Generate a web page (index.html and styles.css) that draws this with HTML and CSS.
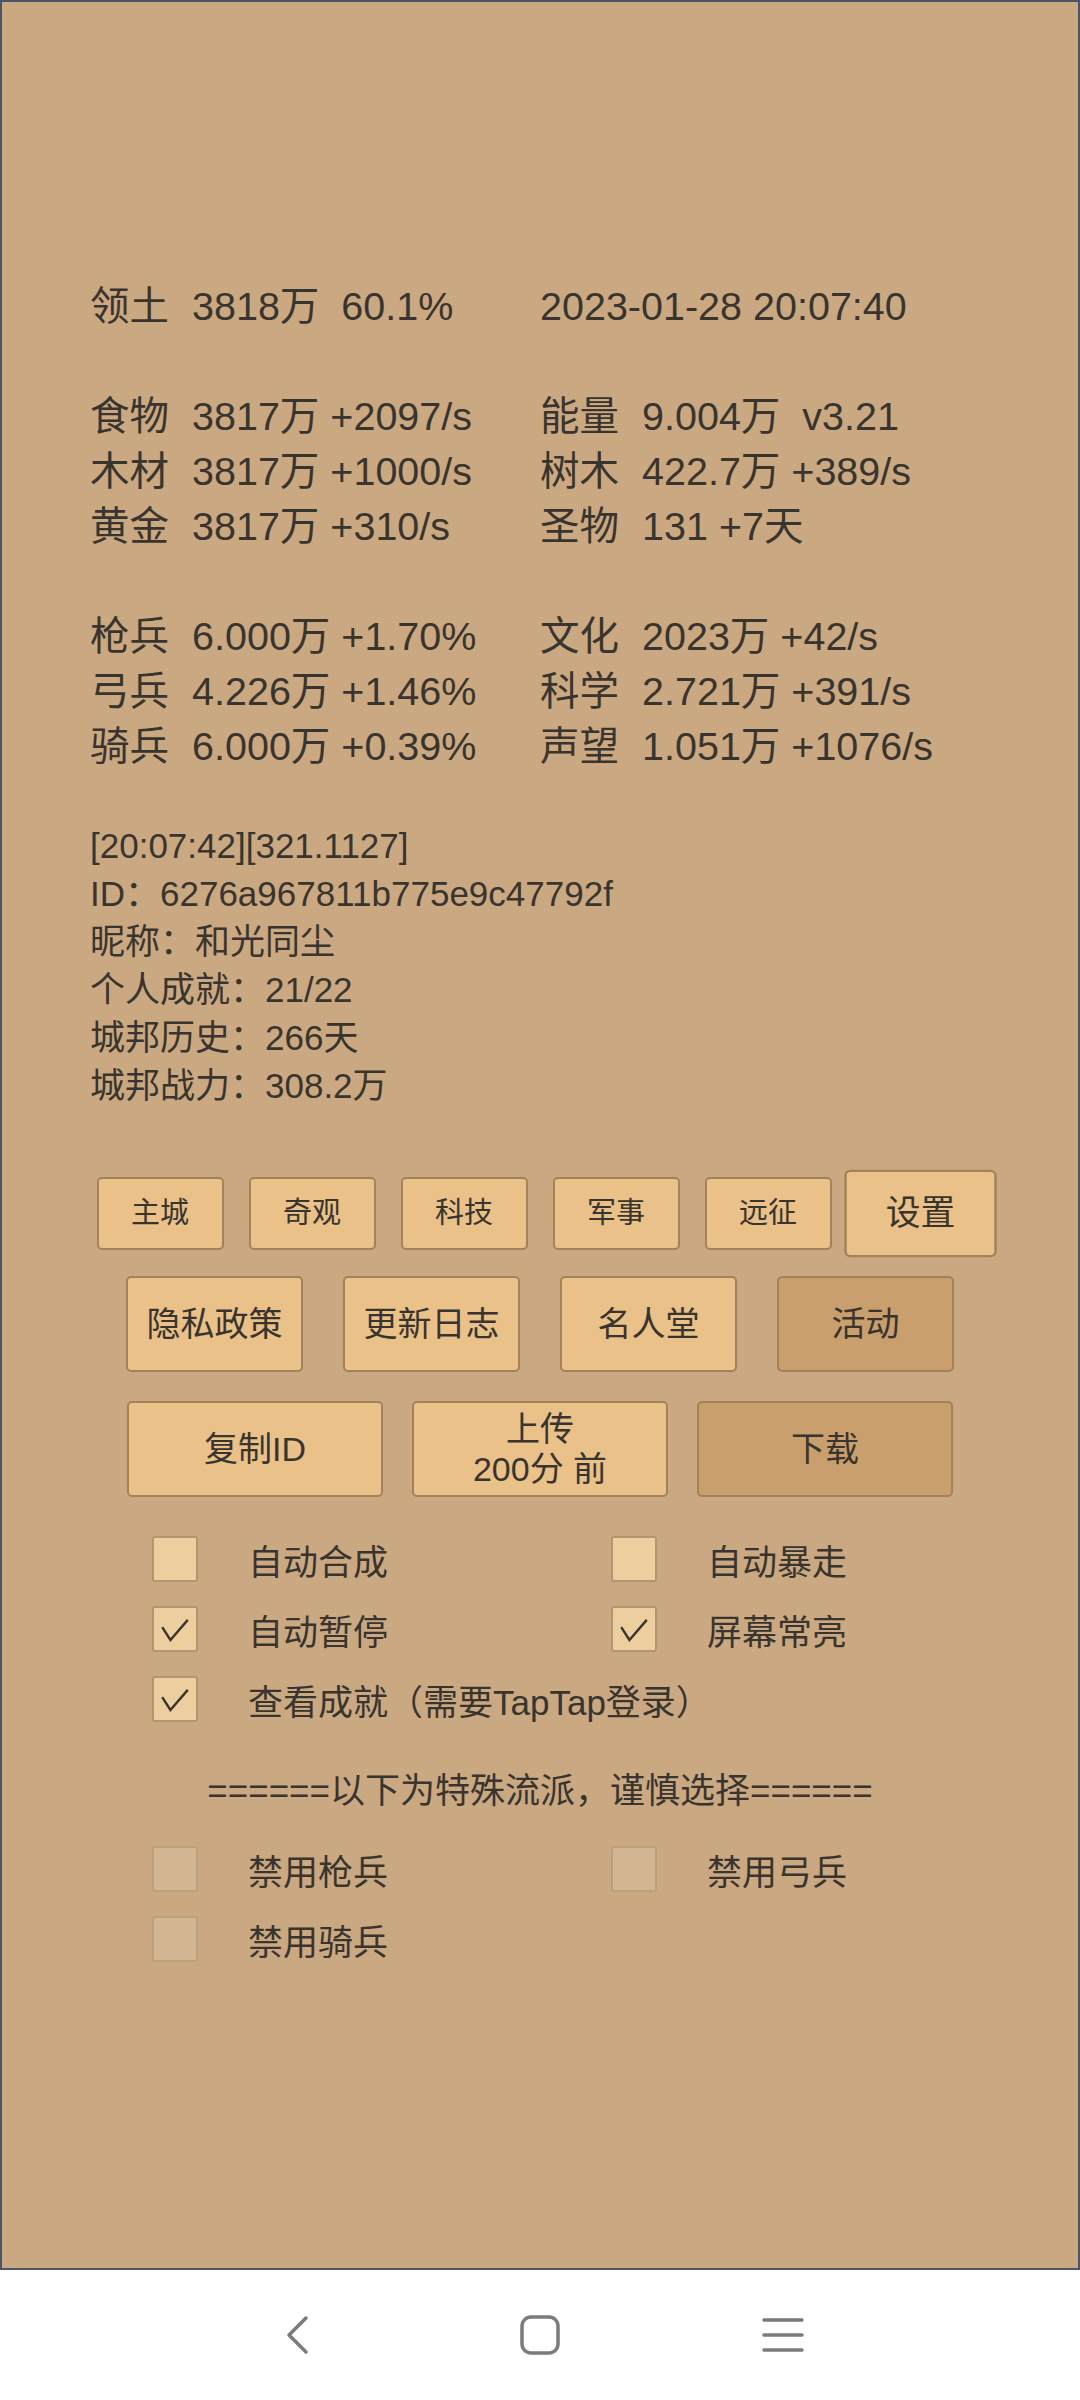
FILE: index.html
```html
<!DOCTYPE html>
<html lang="zh">
<head>
    <meta charset="UTF-8">
    <meta name="viewport" content="width=device-width, initial-scale=1.0">
    <title>城邦</title>
    <link rel="stylesheet" href="styles.css">
</head>
<body>
    <div class="screen">
        <div class="stats">
            <div class="row">
                <div class="cell"><span class="lbl">领土</span><span class="val">3818万  60.1%</span></div>
                <div class="cell">2023-01-28 20:07:40</div>
            </div>

            <div class="group">
                <div class="row">
                    <div class="cell"><span class="lbl">食物</span><span class="val">3817万 +2097/s</span></div>
                    <div class="cell"><span class="lbl">能量</span><span class="val">9.004万  v3.21</span></div>
                </div>
                <div class="row">
                    <div class="cell"><span class="lbl">木材</span><span class="val">3817万 +1000/s</span></div>
                    <div class="cell"><span class="lbl">树木</span><span class="val">422.7万 +389/s</span></div>
                </div>
                <div class="row">
                    <div class="cell"><span class="lbl">黄金</span><span class="val">3817万 +310/s</span></div>
                    <div class="cell"><span class="lbl">圣物</span><span class="val">131 +7天</span></div>
                </div>
            </div>

            <div class="group">
                <div class="row">
                    <div class="cell"><span class="lbl">枪兵</span><span class="val">6.000万 +1.70%</span></div>
                    <div class="cell"><span class="lbl">文化</span><span class="val">2023万 +42/s</span></div>
                </div>
                <div class="row">
                    <div class="cell"><span class="lbl">弓兵</span><span class="val">4.226万 +1.46%</span></div>
                    <div class="cell"><span class="lbl">科学</span><span class="val">2.721万 +391/s</span></div>
                </div>
                <div class="row">
                    <div class="cell"><span class="lbl">骑兵</span><span class="val">6.000万 +0.39%</span></div>
                    <div class="cell"><span class="lbl">声望</span><span class="val">1.051万 +1076/s</span></div>
                </div>
            </div>
        </div>

        <div class="info">
            <div>[20:07:42][321.1127]</div>
            <div>ID：6276a967811b775e9c47792f</div>
            <div>昵称：和光同尘</div>
            <div>个人成就：21/22</div>
            <div>城邦历史：266天</div>
            <div>城邦战力：308.2万</div>
        </div>

        <div class="buttons">
            <div class="btn-row tabs">
                <button class="btn">主城</button>
                <button class="btn">奇观</button>
                <button class="btn">科技</button>
                <button class="btn">军事</button>
                <button class="btn">远征</button>
                <button class="btn active">设置</button>
            </div>
            <div class="btn-row mid">
                <button class="btn">隐私政策</button>
                <button class="btn">更新日志</button>
                <button class="btn">名人堂</button>
                <button class="btn dark">活动</button>
            </div>
            <div class="btn-row wide">
                <button class="btn">复制ID</button>
                <button class="btn two-line">上传<br>200分 前</button>
                <button class="btn dark">下载</button>
            </div>
        </div>

        <div class="options">
            <label class="opt"><span class="box"></span>自动合成</label>
            <label class="opt"><span class="box"></span>自动暴走</label>
            <label class="opt"><span class="box checked"><svg viewBox="0 0 46 46"><polyline points="9,21 18,35 37,13"/></svg></span>自动暂停</label>
            <label class="opt"><span class="box checked"><svg viewBox="0 0 46 46"><polyline points="9,21 18,35 37,13"/></svg></span>屏幕常亮</label>
            <label class="opt full"><span class="box checked"><svg viewBox="0 0 46 46"><polyline points="9,21 18,35 37,13"/></svg></span>查看成就（需要TapTap登录）</label>
        </div>

        <div class="separator">======以下为特殊流派，谨慎选择======</div>

        <div class="options">
            <label class="opt off"><span class="box"></span>禁用枪兵</label>
            <label class="opt off"><span class="box"></span>禁用弓兵</label>
            <label class="opt off"><span class="box"></span>禁用骑兵</label>
        </div>
    </div>

    <div class="navbar">
        <span class="nav-icon">
            <svg viewBox="0 0 60 60"><polyline points="39,13 22,30 39,47"/></svg>
        </span>
        <span class="nav-icon">
            <svg viewBox="0 0 60 60"><rect x="12" y="12" width="36" height="36" rx="9"/></svg>
        </span>
        <span class="nav-icon">
            <svg viewBox="0 0 60 60"><line x1="11" y1="15" x2="49" y2="15"/><line x1="11" y1="30" x2="49" y2="30"/><line x1="11" y1="45" x2="49" y2="45"/></svg>
        </span>
    </div>
</body>
</html>
```

FILE: styles.css
```css
body {
    margin: 0;
    width: 1080px;
    height: 2400px;
    background: #ffffff;
    font-family: "Liberation Sans", "Noto Sans CJK SC", sans-serif;
    color: #3a342e;
    overflow: hidden;
}
.screen {
    box-sizing: border-box;
    height: 2270px;
    border: 2px solid #4d5468;
    background: #caa982;
    padding-top: 277px;
}

/* resource table */
.stats {
    padding-left: 88px;
    font-size: 39.5px;
    line-height: 55px;
}
.row {
    display: grid;
    grid-template-columns: 450px 1fr;
}
.cell {
    display: flex;
    white-space: pre;
}
.lbl {
    width: 102px;
    flex-shrink: 0;
}
.group {
    margin-top: 55px;
}

/* player info */
.info {
    margin-top: 48px;
    padding-left: 88px;
    font-size: 35px;
    line-height: 48px;
}

/* buttons */
.buttons {
    margin-top: 67px;
}
.btn-row {
    display: flex;
    justify-content: center;
}
.btn {
    box-sizing: border-box;
    margin: 0;
    padding: 0;
    border: 2px solid #a3825a;
    border-radius: 5px;
    background: #e9c189;
    color: #3a342e;
    font-family: inherit;
    line-height: 1.2;
}
.btn.dark {
    background: #c99f6d;
}
.tabs {
    gap: 25px;
}
.tabs .btn {
    width: 127px;
    height: 73px;
    font-size: 29px;
}
.tabs .btn.active {
    transform: scale(1.2);
}
.mid {
    gap: 40px;
    margin-top: 26px;
}
.mid .btn {
    width: 177px;
    height: 96px;
    font-size: 34px;
}
.wide {
    gap: 29px;
    margin-top: 29px;
}
.wide .btn {
    width: 256px;
    height: 96px;
    font-size: 34px;
}
.btn.two-line {
    line-height: 40px;
}

/* checkboxes */
.options {
    display: grid;
    grid-template-columns: 459px 1fr;
    row-gap: 24px;
    padding-left: 150px;
    margin-top: 39px;
    font-size: 35px;
}
.opt {
    display: flex;
    align-items: center;
    height: 46px;
    white-space: nowrap;
}
.opt.full {
    grid-column: 1 / 3;
}
.box {
    box-sizing: border-box;
    width: 46px;
    height: 46px;
    margin-right: 50px;
    border: 2px solid #b39572;
    border-radius: 3px;
    background: #ecce9f;
    flex-shrink: 0;
}
.box svg {
    display: block;
    width: 42px;
    height: 42px;
    fill: none;
    stroke: #3a342e;
    stroke-width: 2.6;
}
.opt.off .box {
    background: #d3b592;
    border-color: #bba07f;
}
.separator {
    margin-top: 45px;
    text-align: center;
    font-size: 35px;
    line-height: 48px;
}
.separator + .options {
    margin-top: 31px;
}

/* android nav bar */
.navbar {
    height: 130px;
    display: flex;
    justify-content: center;
    align-items: center;
    gap: 183px;
}
.nav-icon svg {
    display: block;
    width: 60px;
    height: 60px;
    fill: none;
    stroke: #7b7b7b;
    stroke-width: 3.5;
    stroke-linecap: round;
    stroke-linejoin: round;
}
```
